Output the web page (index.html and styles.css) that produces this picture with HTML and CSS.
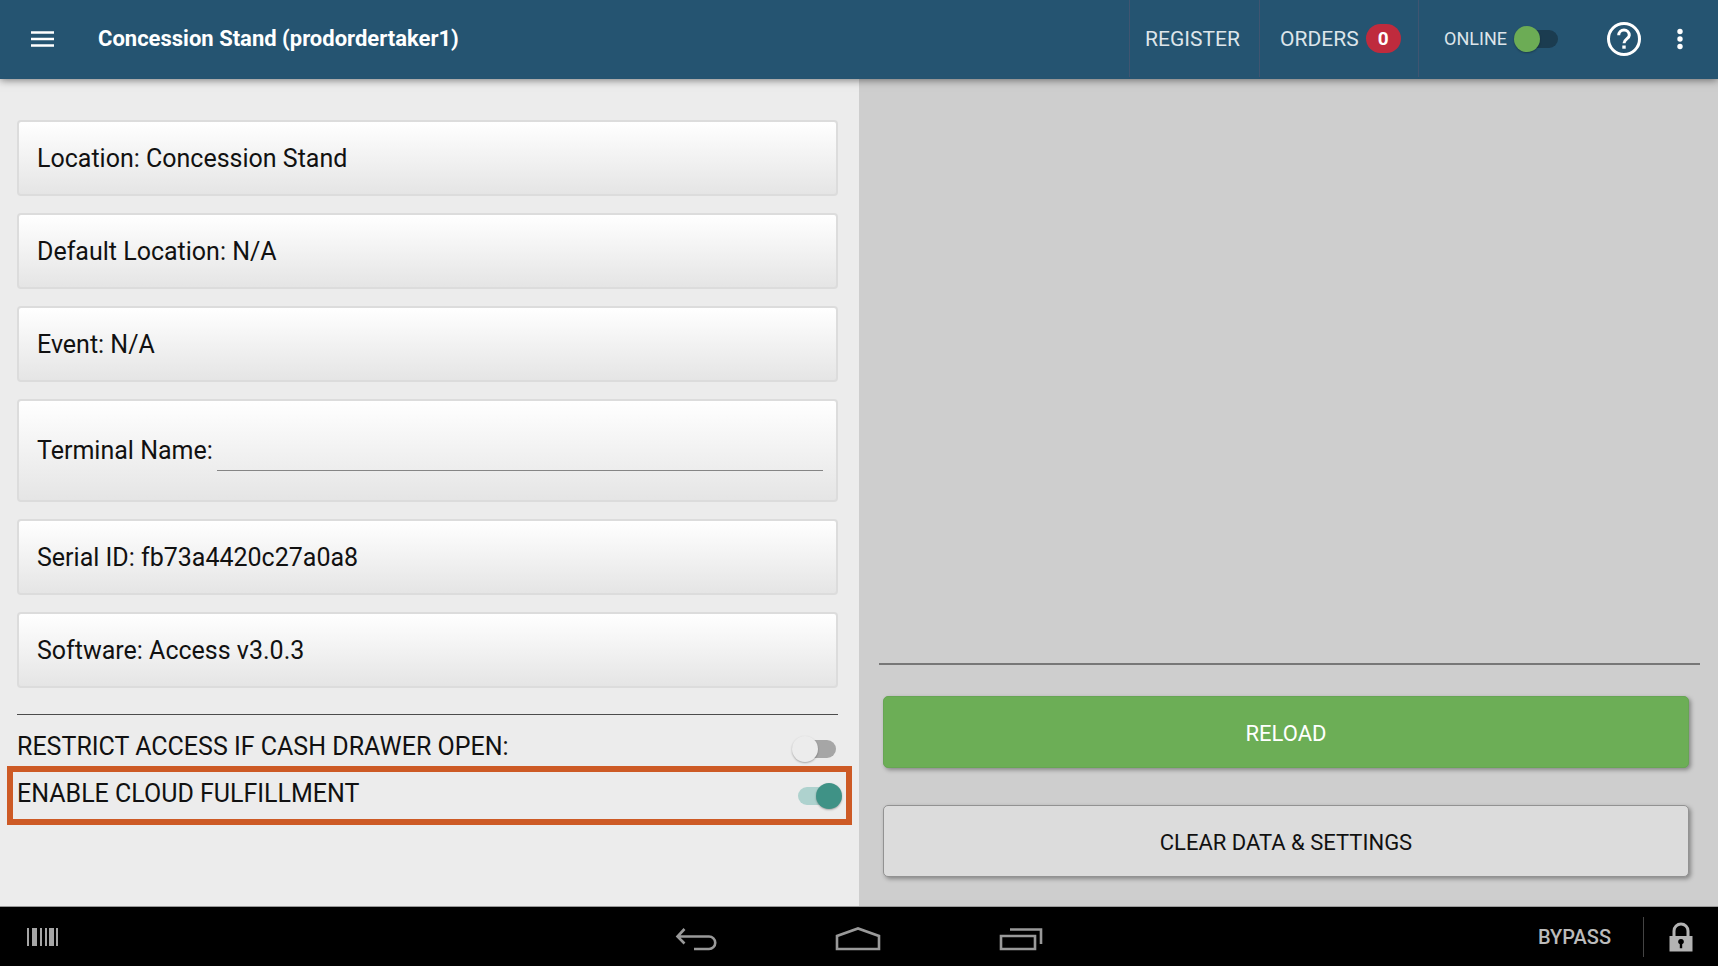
FILE: index.html
```html
<!DOCTYPE html>
<html lang="en">
<head>
  <meta charset="UTF-8" />
  <meta name="viewport" content="width=device-width, initial-scale=1.0" />
  <title>Concession Stand</title>
  <link rel="stylesheet" href="styles.css">
</head>
<body>
  <header class="topbar">
    <button class="icon-btn menu-btn" aria-label="Menu">
      <svg width="24" height="16" viewBox="0 0 24 16"><path d="M0 1.500h23M0 8h23M0 14.500h23" stroke="#fff" stroke-width="2.400" /></svg>
    </button>
    <h1>Concession Stand (prodordertaker1)</h1>
    <button class="top-tab register">REGISTER</button>
    <button class="top-tab orders">ORDERS <span class="badge">0</span></button>
    <div class="online">
      <label for="online">ONLINE</label>
      <input type="checkbox" id="online" class="switch switch-online">
    </div>
    <button class="icon-btn help-btn" aria-label="Help">
      <svg width="36" height="36" viewBox="0 0 36 36" fill="none" stroke="#fff">
        <circle cx="18" cy="18" r="15.5" stroke-width="3" />
        <path d="M12.7 14.2a5.3 5.3 0 0 1 10.6 0c0 3.6-5.3 3.8-5.3 8" stroke-width="3" />
        <path d="M18 24.5v3.2" stroke-width="3.4" />
      </svg>
    </button>
    <button class="icon-btn more-btn" aria-label="More options">
      <svg width="6" height="22" viewBox="0 0 6 22" fill="#fff"><circle cx="3" cy="3.5" r="2.7" /><circle cx="3" cy="11" r="2.7" /><circle cx="3" cy="18.5" r="2.7" /></svg>
    </button>
  </header>

  <main class="panels">
    <section class="settings">
      <div class="cards">
        <div class="card">Location: Concession Stand</div>
        <div class="card">Default Location: N/A</div>
        <div class="card">Event: N/A</div>
        <div class="card card-input">
          <label for="terminal">Terminal Name:</label>
          <input type="text" id="terminal">
        </div>
        <div class="card">Serial ID: fb73a4420c27a0a8</div>
        <div class="card">Software: Access v3.0.3</div>
      </div>
      <hr>
      <div class="option">
        <label for="restrict">RESTRICT ACCESS IF CASH DRAWER OPEN:</label>
        <input type="checkbox" id="restrict" class="switch">
      </div>
      <div class="option highlight">
        <label for="cloud">ENABLE CLOUD FULFILLMENT</label>
        <input type="checkbox" id="cloud" class="switch" checked>
      </div>
    </section>

    <section class="actions">
      <hr>
      <button class="action reload">RELOAD</button>
      <button class="action clear">CLEAR DATA &amp; SETTINGS</button>
    </section>
  </main>

  <footer class="navbar">
    <div class="nav-left">
      <svg width="31" height="18" viewBox="0 0 31 18" fill="#a6a6a6">
        <path d="M0 0h2v18H0zM5 0h5v18H5zM13 0h2v18h-2zM18 0h2v18h-2zM22 0h5v18h-5zM29 0h2v18h-2z" />
      </svg>
    </div>
    <nav class="nav-keys">
      <button class="icon-btn" aria-label="Back">
        <svg width="42" height="24" viewBox="0 0 42 24" fill="none" stroke="#999" stroke-width="2.6"><path d="M9.5 2L2.5 9.5l7 7M2.5 9.5H34a6 6 0 0 1 0 12.5H19" /></svg>
      </button>
      <button class="icon-btn" aria-label="Home">
        <svg width="46" height="24" viewBox="0 0 46 24" fill="none" stroke="#999" stroke-width="2.6"><path d="M2 22V9L23 1.5 44 9v13z" /></svg>
      </button>
      <button class="icon-btn" aria-label="Recent apps">
        <svg width="44" height="24" viewBox="0 0 44 24" fill="none" stroke="#999" stroke-width="2.6"><path d="M2 9h34v13H2zM11 2.5h31V17" /></svg>
      </button>
    </nav>
    <div class="nav-right">
      <span>BYPASS</span>
      <button class="icon-btn lock-btn" aria-label="Lock">
        <svg width="24" height="30" viewBox="0 0 24 30">
          <path d="M5 15V9a7 7 0 0 1 14 0v6" fill="none" stroke="#b3b3b3" stroke-width="3" />
          <path d="M.5 14h23v15.5H.5z" fill="#b3b3b3" />
          <path d="M12 17a2.700 2.700 0 0 1 1.200 5.200v4h-2.400v-4A2.700 2.700 0 0 1 12 17z" fill="#000" />
        </svg>
      </button>
    </div>
  </footer>
</body>
</html>
```

FILE: styles.css
```css
* { box-sizing: border-box; }
body {
  margin: 0;
  min-height: 100vh;
  display: flex;
  flex-direction: column;
  font-family: Roboto, sans-serif;
  font-size: 25px;
  line-height: 32px;
  color: #111;
  background: #ececec;
}
button { font: inherit; color: inherit; border: none; background: none; padding: 0; cursor: pointer; }
svg { display: block; }
hr { border: none; margin: 0; height: 1px; background: #4c4c4c; }

/* top bar */
.topbar {
  display: flex;
  align-items: center;
  height: 79px;
  padding-bottom: 2px;
  background: #255471;
  color: #fff;
  box-shadow: 0 1px 8px rgba(0,0,0,0.5);
  position: relative;
}
.icon-btn { display: flex; align-items: center; justify-content: center; }
.menu-btn { width: 85px; }
.topbar h1 { flex: 1; margin: 0; padding-left: 13px; font-size: 22px; font-weight: 700; }
.top-tab, .online {
  display: flex;
  align-items: center;
  align-self: stretch;
  border-left: 1px solid #3f5571;
  color: #dde5ea;
}
.top-tab { font-size: 21px; }
.register { width: 130px; padding-left: 15px; }
.orders { width: 159px; padding-left: 20px; gap: 7px; }
.badge {
  width: 35px;
  line-height: 29px;
  border-radius: 15px;
  background: #bf2b3d;
  color: #fff;
  font-size: 19px;
  font-weight: 700;
  text-align: center;
}
.online { padding-left: 25px; gap: 7px; font-size: 18px; }
.help-btn { margin-left: 42px; }
.more-btn { width: 76px; }

/* panels */
.panels { flex: 1; display: flex; }
.settings { flex: 1; padding: 41px 21px 40px 17px; }
.cards { display: flex; flex-direction: column; gap: 17px; margin-bottom: 26px; }
.card {
  padding: 21px 13px 19px 18px;
  border: 2px solid #dcdcdc;
  border-radius: 4px;
  background: linear-gradient(#fff, #e5e5e5);
}
.card-input { display: flex; align-items: center; gap: 4px; padding-top: 30px; padding-bottom: 29px; }
.card-input input {
  flex: 1;
  min-width: 0;
  height: 40px;
  padding: 0;
  border: none;
  border-bottom: 1px solid #858585;
  background: none;
  font: inherit;
  outline: none;
}
.option {
  display: flex;
  align-items: center;
  justify-content: space-between;
  margin: 16px -4px 0 0;
}
.option label { padding-bottom: 3px; }
.highlight {
  margin: 0 -14px 0 -10px;
  padding: 6px 4px 6px 4px;
  border: 6px solid #cd5a25;
}

/* switches */
.switch {
  appearance: none;
  position: relative;
  flex: none;
  width: 50px;
  height: 26px;
  margin: 0;
  cursor: pointer;
}
.switch::before {
  content: "";
  position: absolute;
  inset: 4px 6px;
  border-radius: 9px;
  background: #a6a6a6;
}
.switch::after {
  content: "";
  position: absolute;
  top: 0;
  left: 0;
  width: 26px;
  height: 26px;
  border-radius: 50%;
  background: #ececec;
  box-shadow: 0 1px 2px rgba(0,0,0,0.3);
}
.switch:checked::before { background: #aed2ce; }
.switch:checked::after { left: 24px; background: #3f9286; }
.switch-online::before { background: #1b3c50; }
.switch-online::after { background: #6cac55; }

.actions {
  flex: 1;
  display: flex;
  flex-direction: column;
  justify-content: flex-end;
  padding: 0 18px 29px 20px;
  background: #cecece;
}
.actions hr { height: 2px; margin-bottom: 31px; background: #777; }
.action {
  height: 72px;
  margin: 0 11px 0 4px;
  padding-top: 3px;
  border-radius: 5px;
  font-size: 22px;
  box-shadow: 2px 2px 4px rgba(0,0,0,0.35);
}
.reload { margin-bottom: 37px; background: #6cae56; color: #fff; border: 1px solid #67a554; }
.clear { background: #dcdcdc; border: 1px solid #929292; }

/* system bar */
.navbar {
  display: grid;
  grid-template-columns: 1fr auto 1fr;
  align-items: center;
  height: 60px;
  border-top: 1px solid #999;
  background: #000;
  color: #bbb;
}
.nav-left { padding-left: 27px; }
.nav-keys { display: flex; gap: 118px; padding-top: 4px; }
.nav-right { display: flex; align-items: center; justify-content: flex-end; font-size: 20px; font-weight: 500; }
.lock-btn { width: 75px; height: 40px; margin-left: 32px; border-left: 1px solid #444; }
```
